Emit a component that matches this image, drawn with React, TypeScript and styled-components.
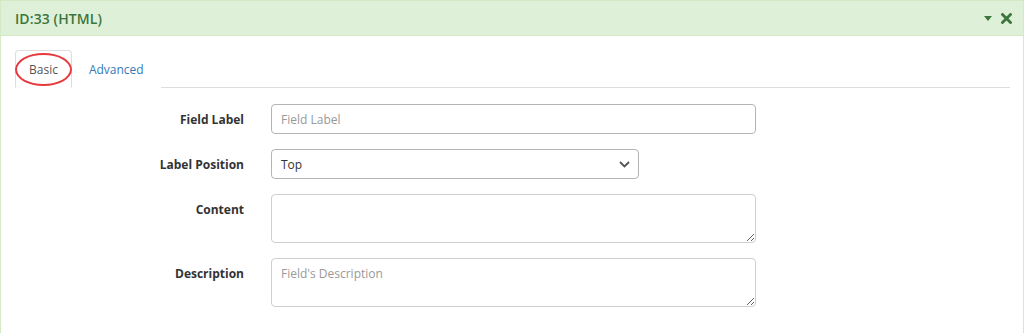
import styled, { createGlobalStyle } from 'styled-components'

// ── Global ────────────────────────────────────────────────────────────────────

const GlobalStyle = createGlobalStyle`
  * { box-sizing: border-box; }
  html, body { margin: 0; padding: 0; background: #fff; }
  body {
    font-family: "Open Sans", "Liberation Sans", Arial, sans-serif;
    font-size: 12px;
    color: #333;
  }
`

// ── Panel ─────────────────────────────────────────────────────────────────────

const Panel = styled.div`
  width: 1024px;
  height: 333px;
  border: 1px solid #d6e9c6;
  border-bottom: none;
  background: #fff;
  overflow: hidden;
`

const Heading = styled.div`
  height: 35px;
  background: #dff0d8;
  border-bottom: 1px solid #d6e9c6;
  color: #3c763d;
  display: flex;
  align-items: center;
  justify-content: space-between;
  padding: 0 11px 0 14px;
`

const Title = styled.h3`
  margin: 0;
  font-size: 14px;
  font-weight: 600;
  letter-spacing: 0.1px;
`

const Tools = styled.div`
  display: flex;
  align-items: center;
  gap: 9px;
`

const Body = styled.div`
  padding: 14px 13px 0 14px;
`

// ── Tabs ──────────────────────────────────────────────────────────────────────

const TabBar = styled.div`
  display: flex;
  align-items: flex-end;
  border-bottom: 1px solid #dddddd;
  height: 38px;
`

const Tab = styled.div<{ $active?: boolean }>`
  position: relative;
  height: ${(p) => (p.$active ? '38px' : '37px')};
  margin-bottom: -1px;
  padding: 0 ${(p) => (p.$active ? '13px' : '16px')};
  display: flex;
  align-items: center;
  font-size: 12px;
  color: ${(p) => (p.$active ? '#555' : '#337ab7')};
  background: #fff;
  border: 1px solid ${(p) => (p.$active ? '#dddddd' : 'transparent')};
  border-bottom-color: ${(p) => (p.$active ? '#fff' : 'transparent')};
  border-radius: 4px 4px 0 0;
`

const Circle = styled.span`
  position: absolute;
  left: -1px;
  top: 2px;
  width: 57px;
  height: 33px;
  border: 2px solid #e63a3f;
  border-radius: 50%;
  pointer-events: none;
`

// ── Form ──────────────────────────────────────────────────────────────────────

const Form = styled.div`
  display: grid;
  grid-template-columns: 229px 485px;
  column-gap: 27px;
  row-gap: 15px;
  margin-top: 16px;
`

const Label = styled.label`
  text-align: right;
  font-weight: 700;
  font-size: 12px;
  color: #333;
  padding-top: 7px;
`

const Input = styled.input`
  display: block;
  width: 100%;
  height: 30px;
  border: 1px solid #b4b4b4;
  border-radius: 4px;
  padding: 0 9px;
  font-family: inherit;
  font-size: 12px;
  color: #555;
  outline: none;
  &::placeholder { color: #999; }
`

const SelectBox = styled.div`
  width: 368px;
  height: 30px;
  border: 1px solid #b4b4b4;
  border-radius: 4px;
  padding: 0 8px 0 9px;
  display: flex;
  align-items: center;
  justify-content: space-between;
  font-size: 12px;
  color: #333;
`

const TextArea = styled.textarea`
  display: block;
  width: 100%;
  height: 49px;
  border: 1px solid #cfcfcf;
  border-radius: 4px;
  padding: 6px 9px;
  font-family: inherit;
  font-size: 12px;
  color: #555;
  outline: none;
  resize: vertical;
  &::placeholder { color: #999; }
`

// ── App ───────────────────────────────────────────────────────────────────────

export default function App() {
  return (
    <>
      <GlobalStyle />
      <Panel>
        <Heading>
          <Title>ID:33 (HTML)</Title>
          <Tools>
            <svg width="8" height="5" viewBox="0 0 8 5">
              <path d="M0 0 H8 L4 5 Z" fill="#3c763d" />
            </svg>
            <svg width="11" height="11" viewBox="0 0 11 11">
              <path d="M1.5 1.5 L9.5 9.5 M9.5 1.5 L1.5 9.5" stroke="#3c763d" strokeWidth="2.8" strokeLinecap="square" />
            </svg>
          </Tools>
        </Heading>
        <Body>
          <TabBar>
            <Tab $active>
              Basic
              <Circle />
            </Tab>
            <Tab>Advanced</Tab>
          </TabBar>
          <Form>
            <Label>Field Label</Label>
            <div><Input placeholder="Field Label" readOnly /></div>

            <Label>Label Position</Label>
            <div>
              <SelectBox>
                <span>Top</span>
                <svg width="11" height="7" viewBox="0 0 11 7">
                  <path d="M1 1 L5.5 5.5 L10 1" fill="none" stroke="#555" strokeWidth="1.8" />
                </svg>
              </SelectBox>
            </div>

            <Label>Content</Label>
            <div><TextArea readOnly /></div>

            <Label>Description</Label>
            <div><TextArea placeholder="Field's Description" readOnly /></div>
          </Form>
        </Body>
      </Panel>
    </>
  )
}
